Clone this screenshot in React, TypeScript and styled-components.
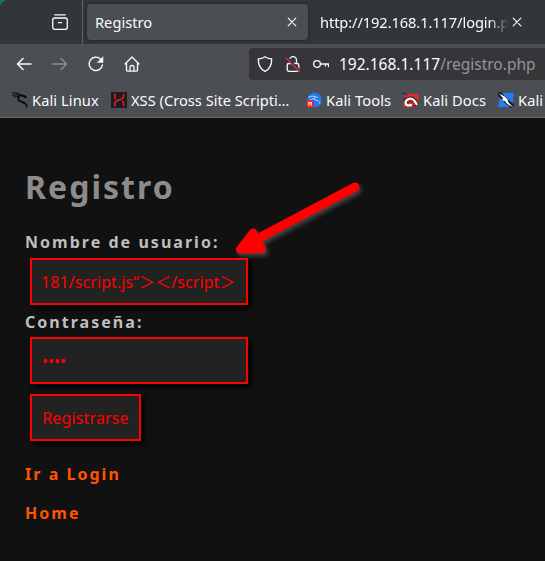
import React from "react";
import styled, { createGlobalStyle } from "styled-components";

const GlobalStyle = createGlobalStyle`
  * { box-sizing: border-box; }
  body { margin: 0; background: #111; }
`;

const Browser = styled.div`
  position: relative;
  width: 545px;
  height: 561px;
  overflow: hidden;
  background: #111;
  font-family: "Noto Sans", "Noto Sans CJK JP", sans-serif;
  color: #fbfbfe;
`;

const TabStrip = styled.div`
  display: flex;
  height: 44px;
  background: radial-gradient(circle at 9px 9px, transparent 0 9px, #1b6a70 9.5px) 0 0 / 9px 9px no-repeat, #31363b;
`;

const ViewButton = styled.div`
  display: flex;
  align-items: center;
  justify-content: flex-end;
  flex: none;
  width: 83px;
  padding-right: 14px;
  border-right: 1px solid #5f6266;
`;

const Tab = styled.div<{ $active?: boolean }>`
  display: flex;
  align-items: center;
  flex: none;
  width: 221px;
  height: 36px;
  margin: 4px 0 0 4px;
  padding: 0 8px;
  border-radius: 4px;
  background: ${(p) => (p.$active ? "#4b4e53" : "transparent")};
  box-shadow: ${(p) => (p.$active ? "0 0 3px rgba(0, 0, 0, 0.5)" : "none")};
`;

const TabTitle = styled.span<{ $fade?: boolean }>`
  flex: 1;
  min-width: 0;
  overflow: hidden;
  white-space: nowrap;
  font-size: 14.67px;
  line-height: 22px;
  letter-spacing: ${(p) => (p.$fade ? "-0.1px" : "0")};
  ${(p) => p.$fade && "mask-image: linear-gradient(to left, transparent, #000 20px);"}
`;

const TabClose = styled.span`
  display: flex;
  width: 16px;
`;

const NavBar = styled.div`
  display: flex;
  align-items: center;
  height: 40px;
  padding-left: 16px;
  background: #4b4e53;
`;

const NavButtons = styled.div`
  display: flex;
  flex: none;
  gap: 20px;
  width: 233px;
`;

const AddressBar = styled.div`
  display: flex;
  align-items: center;
  flex: none;
  width: 320px;
  height: 32px;
  padding-left: 8px;
  border-radius: 4px;
  background: #36363a;
  gap: 12px;
`;

const Address = styled.span`
  margin-left: -2px;
  white-space: nowrap;
  font-size: 15.5px;
  line-height: 24px;
`;

const AddressPath = styled.span`
  color: #94949a;
`;

const Bookmarks = styled.div`
  display: flex;
  height: 34px;
  padding: 0 0 1px 12px;
  background: #4b4e53;
  border-bottom: 1px solid #66686b;
`;

const Bookmark = styled.div<{ $width: number; $tracking?: number }>`
  display: flex;
  align-items: center;
  flex: none;
  gap: 4px;
  width: ${(p) => p.$width}px;
  white-space: nowrap;
  font-size: 14.67px;
  line-height: 22px;
  letter-spacing: ${(p) => p.$tracking ?? 0.08}px;
`;

const Icon = styled.svg`
  flex: none;
  display: block;
  fill: none;
  stroke: currentColor;
  stroke-width: 1.3;
  stroke-linecap: round;
  stroke-linejoin: round;
`;

const Page = styled.main`
  display: flex;
  flex-direction: column;
  align-items: flex-start;
  padding: 47px 25px 0;
  font-weight: 700;
  font-size: 16px;
  letter-spacing: 2.03px;
  color: #bfbfbf;
`;

const Heading = styled.h1`
  margin: 0 0 22px;
  font-size: 32px;
  line-height: 44px;
  color: #8c8c8c;
`;

const Label = styled.label`
  height: 22px;
  line-height: 22px;
`;

const fieldStyle = `
  display: block;
  height: 47px;
  border: 2px solid #f00;
  border-radius: 0;
  background: #222;
  color: #f00;
  font: 400 16px/22px "Noto Sans", "Noto Sans CJK JP", sans-serif;
  box-shadow: 3px 3px 5px #000;
  outline: none;
`;

const Field = styled.input`
  ${fieldStyle}
  width: 218px;
  margin: 5px 5px 6px;
  padding: 0 9px 2px;
  letter-spacing: 0.08px;

  &[type="password"] {
    margin-top: 4px;
    padding: 0 10px;
    letter-spacing: 0;
  }
`;

const Submit = styled.button`
  ${fieldStyle}
  width: 111px;
  margin: 4px 5px 22px;
  padding: 0;
  letter-spacing: 0.14px;
`;

const PageLink = styled.a`
  height: 22px;
  margin-bottom: 17px;
  line-height: 22px;
  color: #ff5500;
`;

const ArrowOverlay = styled.svg`
  position: absolute;
  left: 225px;
  top: 172px;
  filter: drop-shadow(2px 3px 2px rgba(130, 130, 130, 0.45));
`;

const CloseIcon = () => (
  <Icon width="16" height="16" viewBox="0 0 16 16"><path strokeWidth="1.2" d="M4.200 4.200l7.600 7.600M11.800 4.200l-7.600 7.600" /></Icon>
);

const KaliDragon = () => (
  <Icon width="16" height="16" viewBox="0 0 16 16">
    <g stroke="#060606">
      <path strokeWidth="1" d="M.5.8C4 .6 6 1 8.500 2.500M.8 3.400C3 2.300 5 2.500 7.200 3.300M2 5.300c1.700-.9 3-1.100 4.500-.9" />
      <path strokeWidth="1.700" d="M7.600 3.500l3 .2 3 1.500" />
      <path strokeWidth="1.600" d="M7 4.500c-1.500 2.200-1.200 4 1.500 4.700 3 .6 4.800 1.200 6 4.300" />
      <path strokeWidth=".9" d="M11 3.200l2 .5 2 1.800M14.500 13.500v2M9.500 10.500l2 .8" />
    </g>
  </Icon>
);

const XssLogo = () => (
  <Icon width="16" height="16" viewBox="0 0 16 16">
    <rect width="16" height="16" fill="#1b1d22" stroke="none" />
    <g stroke="#ed1c14" strokeWidth="1.5" strokeLinecap="butt">
      <path d="M3.700 1.500v3.200c0 1.200.5 1.800 1.600 2.400M12.500 1.500v2.800c0 2.200-1.200 3-4.400 3.700s-4.400 1.500-4.400 3.700v2.800M12.500 14.500v-3.200c0-1.200-.5-1.800-1.600-2.400" />
    </g>
  </Icon>
);

const ToolsLogo = () => (
  <Icon width="16" height="16" viewBox="0 0 16 16">
    <circle cx="8.500" cy="8" r="7.300" fill="#2378f5" stroke="none" />
    <path stroke="#b6d6fa" strokeWidth="1" d="M2.800 5c3-1.300 6-1.100 8.700.4M4.500 7.300c2-.7 3-.7 4.500 0M8.500 5.500c-.5 2.200.7 2.700 2.700 3s2.500 1.300 2.600 2.800" />
    <circle cx="4" cy="12" r="3.900" fill="#ed2424" stroke="none" />
    <path stroke="#fff" strokeWidth="1" strokeLinecap="butt" d="M2 10.700h4M3 10.700v3M5.200 10.700v3" />
  </Icon>
);

const DocsLogo = () => (
  <Icon width="16" height="16" viewBox="0 0 16 16">
    <path fill="#ee252c" stroke="none" d="M2 2h14l-2 13H0z" />
    <path stroke="#17191c" strokeWidth="1" d="M.5 1L4 3M.8 7.500L3 5.500" />
    <path stroke="#17191c" strokeWidth="3.400" d="M2.500 10.500C3 7.500 6 6 8.500 6.200s4 2.800 5 5.300" />
    <path stroke="#fff" strokeWidth="2.300" d="M8 13c-2.500 1-5.500.2-5.500-2.300C2.500 8 5.500 6.500 8 6.600s4 2.400 5.500 5.400" />
    <path stroke="#17191c" strokeWidth="1" d="M5 11c.5-1.700 3-2.300 4.300-.7M10 13.500l3 .5" />
  </Icon>
);

const KaliBlueLogo = () => (
  <Icon width="16" height="16" viewBox="0 0 16 16">
    <path fill="#237bf5" stroke="none" d="M2.500 1H16l-2 14H0z" />
    <path stroke="#191c20" strokeWidth="4.500" d="M2 2.500l5 5 6.500 6" />
    <path fill="#fff" stroke="none" d="M1 1.500l5 2.500 3.500 3.300 1 3.200L15.500 15.500l-6.500-3.500-2-2.800-3-1.200 1.200-1.500z" />
    <path stroke="#191c20" strokeWidth=".7" d="M1 .5l5 3M.5 4.500l3 1.500M6.500 10l3 2.500" />
  </Icon>
);

export default function App() {
  return (
    <>
      <GlobalStyle />
      <Browser>
        <TabStrip>
          <ViewButton>
            <Icon width="16" height="16" viewBox="0 0 16 16">
              <rect x=".7" y="4" width="14.600" height="11.300" rx="2" />
              <path d="M2.800 .8h10.400M6.500 8.700h3" />
            </Icon>
          </ViewButton>
          <Tab $active>
            <TabTitle>Registro</TabTitle>
            <TabClose><CloseIcon /></TabClose>
          </Tab>
          <Tab>
            <TabTitle $fade>http://192.168.1.117/login.php</TabTitle>
            <TabClose><CloseIcon /></TabClose>
          </Tab>
        </TabStrip>
        <NavBar>
          <NavButtons>
            <Icon width="16" height="16" viewBox="0 0 16 16"><path strokeWidth="1.500" d="M15 8H1.500M7 2.500L1.500 8 7 13.500" /></Icon>
            <Icon width="16" height="16" viewBox="0 0 16 16" color="#8d8f92"><path strokeWidth="1.500" d="M1 8h13.500M9 2.500L14.500 8 9 13.500" /></Icon>
            <Icon width="16" height="16" viewBox="0 0 16 16">
              <path strokeWidth="1.400" d="M12.500 3A6.700 6.700 0 1 0 14.500 9" />
              <path fill="currentColor" strokeWidth=".5" d="M15 1v5.500H9.500z" />
            </Icon>
            <Icon width="16" height="16" viewBox="0 0 16 16">
              <path d="M1 8L8 1l7 7M2.500 7v7q0 1.200 1.200 1.200h8.600q1.200 0 1.200-1.200V7M6 15v-4q0-1.500 2-1.500t2 1.500v4" />
            </Icon>
          </NavButtons>
          <AddressBar>
            <Icon width="16" height="16" viewBox="0 0 16 16"><path d="M8 .8c2 1.500 4.200 2 6.700 2.200C14.800 9 12.800 13 8 15.300 3.200 13 1.200 9 1.300 3 3.800 2.800 6 2.300 8 .8z" /></Icon>
            <Icon width="16" height="16" viewBox="0 0 16 16">
              <path d="M4.500 4.500V4.200a3.500 3.500 0 0 1 7 0v3.300M4 7.500h8q1.800 0 1.800 1.800v4.200q0 1.800-1.800 1.800H4q-1.800 0-1.800-1.800V9.300Q2.200 7.500 4 7.500z" />
              <path stroke="#36363a" strokeWidth="2.600" d="M2 2l12.500 12.500" />
              <path stroke="#e22850" strokeWidth="1.300" d="M1 2l13.500 13.500" />
            </Icon>
            <Icon width="16" height="16" viewBox="0 0 16 16"><circle cx="4" cy="8" r="3.400" /><path d="M7.400 8h8.100v2.500M12.500 8v2" /></Icon>
            <Address>192.168.1.117<AddressPath>/registro.php</AddressPath></Address>
          </AddressBar>
        </NavBar>
        <Bookmarks>
          <Bookmark $width={99}><KaliDragon />Kali Linux</Bookmark>
          <Bookmark $width={195} $tracking={0}><XssLogo />XSS (Cross Site Scripti…</Bookmark>
          <Bookmark $width={97}><ToolsLogo />Kali Tools</Bookmark>
          <Bookmark $width={95}><DocsLogo />Kali Docs</Bookmark>
          <Bookmark $width={47}><KaliBlueLogo />Kali</Bookmark>
        </Bookmarks>
        <Page>
          <Heading>Registro</Heading>
          <Label htmlFor="user">Nombre de usuario:</Label>
          <Field id="user" defaultValue="181/script.js“＞＜/script＞" />
          <Label htmlFor="pass">Contraseña:</Label>
          <Field id="pass" type="password" defaultValue="1234" />
          <Submit type="button">Registrarse</Submit>
          <PageLink>Ir a Login</PageLink>
          <PageLink>Home</PageLink>
        </Page>
        <ArrowOverlay width="150" height="100" viewBox="225 172 150 100">
          <path d="M355 187L255 240" stroke="#f00" strokeWidth="9" strokeLinecap="round" />
          <path d="M253 232.500L240 249.500L262 249z" fill="#f00" stroke="#f00" strokeWidth="8" strokeLinejoin="round" />
        </ArrowOverlay>
      </Browser>
    </>
  );
}
